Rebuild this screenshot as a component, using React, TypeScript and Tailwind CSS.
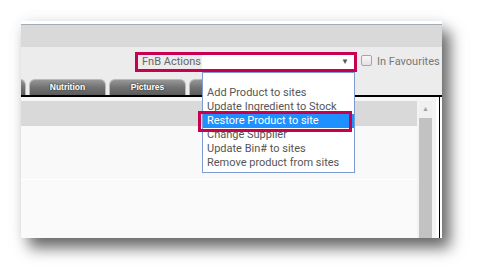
const menuItems = [
  '',
  'Add Product to sites',
  'Update Ingredient to Stock',
  'Restore Product to site',
  'Change Supplier',
  'Update Bin# to sites',
  'Remove product from sites',
]

// first and last tabs are only partly visible (cut by the edge / behind the menu)
const tabs = ['', 'Nutrition', 'Pictures', '']

function Tab({ label, first }: { label: string; first?: boolean }) {
  return (
    <div
      className={`${first ? 'ml-[-72px]' : ''} w-[77px] h-[16px] shrink-0 rounded-t-[6px] border border-b-0 border-[#b9b9b9] bg-gradient-to-b from-[#979797] via-[#727272] to-[#5c5c5c] flex items-center justify-center`}
    >
      <span className="text-[8.5px] font-bold text-white font-['Liberation_Sans',Arial,sans-serif] [text-shadow:0_0_2px_#222]">
        {label}
      </span>
    </div>
  )
}

export default function App() {
  return (
    <div className="w-[484px] h-[280px] bg-white pl-[21px] pt-[21px] font-['Roboto',sans-serif]">
      <div className="relative w-[421px] h-[217px] bg-[#fafafa] flex flex-col shadow-[8px_10px_14px_rgba(0,0,0,0.58),0_0_14px_rgba(0,0,0,0.07)]">
        <div className="h-[3px] bg-white" />
        <div className="h-px bg-[#a3adb6]" />
        <div className="h-[22px] bg-[#d9d9d9]" />

        {/* toolbar */}
        <div className="h-[48px] bg-[#ececec] flex flex-col">
          <div className="mt-[5px] h-[20px] flex items-start pl-[114px]">
            <div className="w-[222px] h-[20px] border-[3px] border-[#c8004f] flex items-center">
              <div className="w-[64px] pl-[4px] text-[11px] leading-[14px] text-[#666] whitespace-nowrap">FnB Actions</div>
              <div className="w-[152px] h-[14px] bg-white flex items-center justify-end pr-[5px]">
                <span className="text-[8px] leading-none text-[#555]">▼</span>
              </div>
            </div>
            <div className="ml-[4px] mt-[3px] w-[11px] h-[11px] rounded-[2px] border border-[#a5a5a5] bg-gradient-to-b from-[#f7f7f7] to-[#e2e2e2]" />
            <div className="ml-[5px] mt-[3px] text-[11px] leading-[14px] text-[#777] whitespace-nowrap">In Favourites</div>
          </div>
          <div className="mt-[7px] h-[16px] flex items-end gap-[3px] overflow-hidden">
            {tabs.map((t, i) => (
              <Tab key={i} label={t} first={i === 0} />
            ))}
          </div>
        </div>
        <div className="h-[2px] bg-black" />

        {/* content */}
        <div className="flex-1 flex">
          <div className="w-[396px] flex flex-col bg-[#fafafa]">
            <div className="h-[4px] bg-[#f6f6f6]" />
            <div className="h-[25px] bg-[#d9d9d9]" />
            <div className="h-[53px] bg-[#f9f9f9]" />
            <div className="h-px bg-white" />
            <div className="flex-1 bg-[#fafafa]" />
          </div>
          <div className="w-[2px] bg-[#f3f3f3]" />
          <div className="w-[13px] flex flex-col bg-[#f0f0f0]">
            <div className="h-[4px] bg-[#f6f6f6]" />
            <div className="h-[17px] flex items-center justify-center">
              <span className="text-[7px] leading-none text-[#a0a0a0]">▲</span>
            </div>
            <div className="flex-1 bg-[#c2c2c2]" />
          </div>
          <div className="w-[4px] bg-[#f3f3f3]" />
          <div className="w-[3px] bg-white" />
          <div className="w-px bg-black" />
          <div className="w-[2px] bg-white" />
        </div>

        {/* open dropdown list */}
        <div className="absolute left-[181px] top-[51px] w-[153px] h-[101px] bg-white border border-[#7b9bd1]">
          {menuItems.map((item, i) => (
            <div
              key={i}
              className={`${i === 0 ? 'h-[13px]' : 'h-[14px]'} pl-[4px] text-[11px] leading-[14px] whitespace-nowrap ${
                i === 3 ? 'bg-[#1e90ff] text-white' : 'text-[#555]'
              }`}
            >
              {item}
            </div>
          ))}
        </div>

        {/* highlight annotation */}
        <div className="absolute left-[177px] top-[90px] w-[154px] h-[21px] border-[3px] border-[#c8004f]" />
      </div>
    </div>
  )
}
